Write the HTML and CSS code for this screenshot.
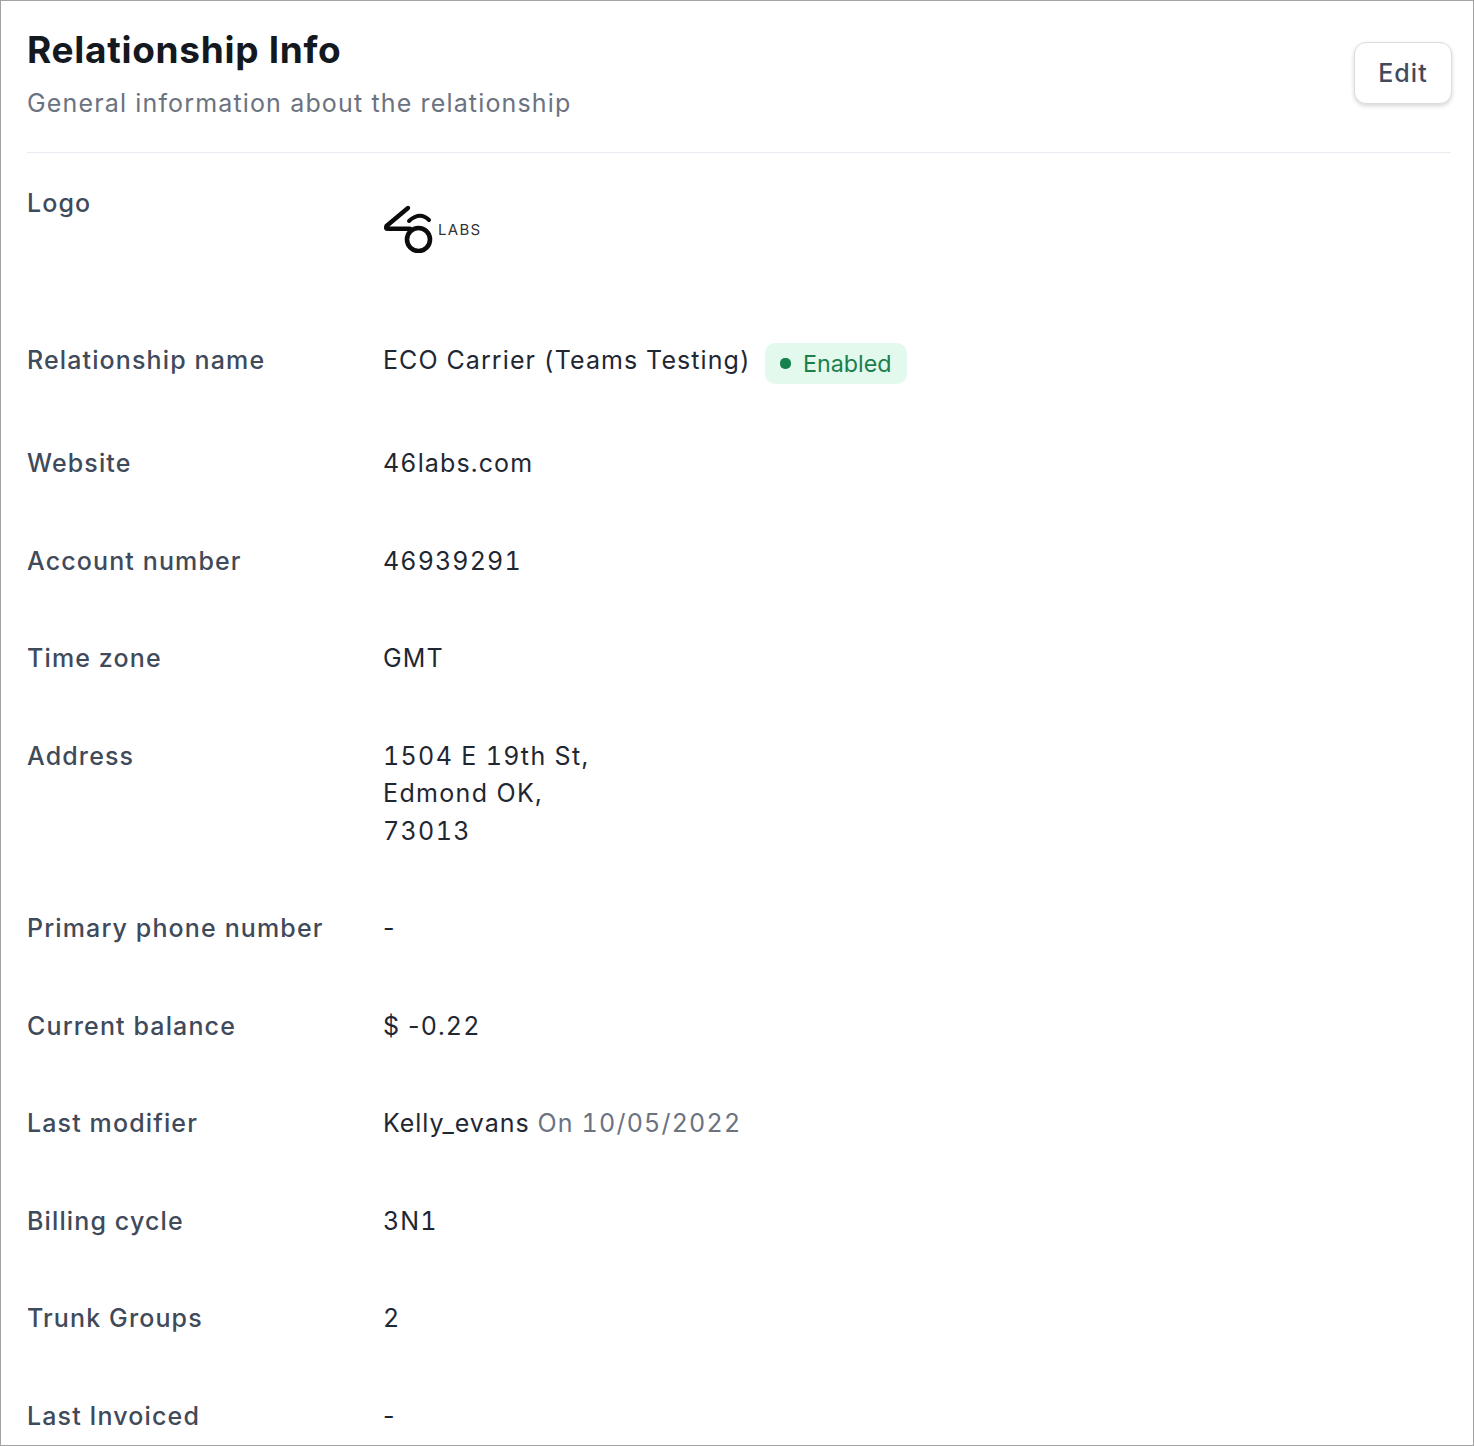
FILE: index.html
```
<!DOCTYPE html>
<html lang="en">
<head>
<meta charset="utf-8">
<title>Relationship Info</title>
<link rel="stylesheet" href="styles.css">
</head>
<body>
<main class="card">
  <header class="head">
    <div>
      <h1 class="title">Relationship Info</h1>
      <p class="subtitle">General information about the relationship</p>
    </div>
    <button class="edit" type="button">Edit</button>
  </header>
  <dl class="rows">
    <div class="row row-logo">
      <dt class="label">Logo</dt>
      <dd class="value">
        <span class="logo">
          <svg class="logo-mark" viewBox="0 0 50 50" width="50" height="50" aria-hidden="true">
            <path d="M25 5 L3.500 23 Q2 25.800 5 25.800 L27 25.800" fill="none" stroke="#0c0c0c" stroke-width="4.400" stroke-linecap="round"/>
            <path d="M26 18 Q37 8 46 17" fill="none" stroke="#0c0c0c" stroke-width="4" stroke-linecap="round"/>
            <circle cx="35.500" cy="36.500" r="11.500" fill="none" stroke="#0c0c0c" stroke-width="4.600"/>
          </svg>
          <span class="logo-text">LABS</span>
        </span>
      </dd>
    </div>
    <div class="row row-name">
      <dt class="label">Relationship name</dt>
      <dd class="value value-inline">ECO Carrier (Teams Testing)<span class="badge"><i class="dot"></i>Enabled</span></dd>
    </div>
    <div class="row"><dt class="label">Website</dt><dd class="value">46labs.com</dd></div>
    <div class="row"><dt class="label">Account number</dt><dd class="value">46939291</dd></div>
    <div class="row"><dt class="label">Time zone</dt><dd class="value">GMT</dd></div>
    <div class="row"><dt class="label">Address</dt><dd class="value value-address">1504 E 19th St,<br>Edmond OK,<br>73013</dd></div>
    <div class="row"><dt class="label">Primary phone number</dt><dd class="value"><span class="dash">-</span></dd></div>
    <div class="row"><dt class="label">Current balance</dt><dd class="value">$ <span class="dash">-</span>0.22</dd></div>
    <div class="row"><dt class="label">Last modifier</dt><dd class="value"><span class="name">Kelly_evans</span> <span class="muted">On 10/05/2022</span></dd></div>
    <div class="row"><dt class="label">Billing cycle</dt><dd class="value">3N1</dd></div>
    <div class="row"><dt class="label">Trunk Groups</dt><dd class="value">2</dd></div>
    <div class="row"><dt class="label">Last Invoiced</dt><dd class="value"><span class="dash">-</span></dd></div>
  </dl>
</main>
</body>
</html>
```
FILE: styles.css
```
* { box-sizing: border-box; }
html, body { margin: 0; padding: 0; background: #fff; }
body { font-family: Inter, "Liberation Sans", sans-serif; height: 1446px; overflow: hidden; }
.card {
  height: 1446px;
  border: 1px solid #a3a3a3;
  padding: 0 22px 0 26px;
  overflow: hidden;
}
.head {
  display: flex;
  justify-content: space-between;
  align-items: flex-start;
  padding-top: 25px;
  height: 152px;
  border-bottom: 1px solid #e8ebf2;
}
.title {
  margin: 0;
  font-size: 37px;
  line-height: 47px;
  font-weight: 700;
  color: #14181f;
  letter-spacing: 0.700px;
}
.subtitle {
  margin: 12px 0 0;
  font-size: 25px;
  line-height: 37.500px;
  color: #6b7280;
  letter-spacing: 1.150px;
}
.edit {
  margin: 16px -1px 0 0;
  width: 98px;
  height: 62px;
  padding: 0;
  border: 1px solid #dcdcdf;
  border-radius: 12px;
  background: #fff;
  box-shadow: 0 2px 4px rgba(0,0,0,0.16);
  font: 500 25px Inter, sans-serif;
  color: #424a5c;
  letter-spacing: 1.100px;
}
.rows { margin: 0; padding-top: 32px; }
.row {
  display: grid;
  grid-template-columns: 356px 1fr;
  margin-bottom: 60px;
  font-size: 25px;
  line-height: 37.500px;
  letter-spacing: 1.130px;
}
.row-logo { height: 97px; }
.row-name { margin-bottom: 61px; }
.label { font-weight: 500; color: #3f4a5a; }
.value { margin: 0; color: #1f2733; font-weight: 400; font-variant-numeric: tabular-nums; }
.value-inline { display: flex; align-items: flex-start; letter-spacing: 1.090px; }
.value-address { letter-spacing: 1.350px; }
.dash { font-variant-numeric: normal; }
.name { letter-spacing: 0.950px; }
.muted { color: #6b7280; letter-spacing: 1.200px; }
.logo { display: flex; align-items: center; gap: 5px; margin-top: 18px; }
.logo-mark { display: block; }
.logo-text { font-size: 15px; line-height: 18px; font-weight: 400; color: #333; letter-spacing: 1.300px; margin-top: 4px; }
.badge {
  display: inline-flex;
  align-items: center;
  gap: 12px;
  height: 41px;
  margin: 1px 0 0 14px;
  padding: 0 15px;
  border-radius: 10px;
  background: #e3f9ee;
  color: #1b7f4c;
  font-size: 23.300px;
  letter-spacing: 0;
}
.dot { width: 11px; height: 11px; border-radius: 45%; background: #15814c; }
```
